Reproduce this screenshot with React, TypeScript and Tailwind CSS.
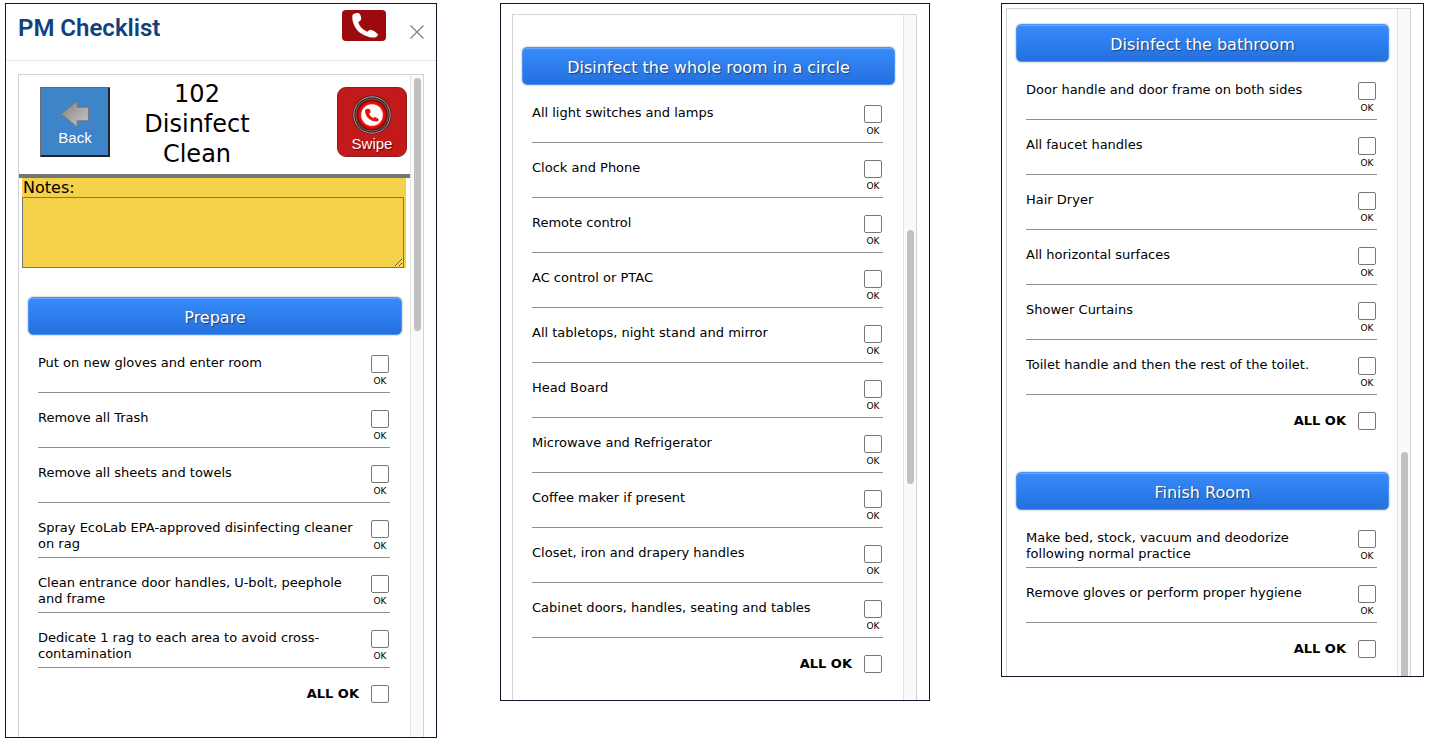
import React, { useId } from 'react';

const handsetPath =
  'M10.6 4.8 C12.5 3.2 15 2.6 17 3.2 C18.6 4.8 19.4 7 19.2 9.6 C18.6 10.8 17.4 11.4 16.4 12 C17 16 21 20 25.6 21.8 C26.4 20.8 27 20.2 28.2 19.8 C31 20.2 34 22 36 24.4 C35.8 26 34.4 27 32.4 27.5 C28 28 21 25.4 16.2 21.2 C12 17 9.4 10 10.6 4.8 Z';

function BackArrow() {
  return (
    <svg viewBox="0 0 32 28" className="h-7 w-8" aria-hidden="true">
      <defs>
        <linearGradient id="arrowFill" x1="0" y1="0" x2="1" y2="1">
          <stop offset="0" stopColor="#7d7d7d" />
          <stop offset="0.5" stopColor="#a6a6a2" />
          <stop offset="1" stopColor="#c9c9c4" />
        </linearGradient>
      </defs>
      <path
        d="M2.2 14 L18.2 1 V7.2 H29.4 V20.8 H18.2 V27 Z"
        fill="url(#arrowFill)"
        stroke="#77777a"
        strokeWidth="1"
        strokeLinejoin="round"
      />
    </svg>
  );
}

function SwipeBadge() {
  return (
    <svg viewBox="0 0 40 40" className="h-10 w-10" aria-hidden="true">
      <defs>
        <radialGradient id="badgeRed">
          <stop offset="0.7" stopColor="#ff1a1a" />
          <stop offset="0.9" stopColor="#d00808" />
          <stop offset="1" stopColor="#8a0000" />
        </radialGradient>
      </defs>
      <circle cx="20" cy="20" r="19.5" fill="#3c2222" />
      <circle cx="20" cy="20" r="18.2" fill="none" stroke="#e79a9a" strokeWidth="0.9" />
      <circle cx="20" cy="20" r="16.2" fill="none" stroke="#8a6060" strokeWidth="0.9" />
      <circle cx="20" cy="20" r="15" fill="url(#badgeRed)" />
      <circle cx="20" cy="20" r="10.8" fill="#fff" />
      <svg x="13" y="13.5" width="14" height="13" viewBox="9 2 28 26">
        <path d={handsetPath} fill="#e81010" stroke="#e81010" strokeWidth="2" />
      </svg>
    </svg>
  );
}

function SectionButton({ children }: { children: React.ReactNode }) {
  return (
    <button
      type="button"
      className="mr-2 ml-[9px] h-[38px] rounded-[5px] border border-[#4b93f5] bg-linear-to-b from-[#388bfb] to-[#2470de] pt-[3px] text-base text-white shadow-[0_0_2px_#9a9a9a,inset_0_1px_0_#63a5fa] text-shadow-[1px_1px_1px_#1c3f73]"
    >
      {children}
    </button>
  );
}

const boxClass =
  'block size-[18px] shrink-0 appearance-none rounded-[2px] border border-[#767676] bg-white checked:bg-[#2470de]';

function CheckRow({ label }: { label: string }) {
  const id = useId();
  return (
    <li className="flex h-[55px] justify-between border-b border-[#8f8f8f] pt-[17px]">
      <label htmlFor={id} className="w-[324px] text-[13px] leading-4">
        {label}
      </label>
      <div className="flex flex-col items-center pr-px">
        <input id={id} type="checkbox" className={boxClass} />
        <span className="mt-[2px] text-[9px] leading-3">OK</span>
      </div>
    </li>
  );
}

function AllOk() {
  const id = useId();
  return (
    <div className="mr-5 ml-[19px] flex items-center justify-end gap-3 pt-[17px] pr-px">
      <label htmlFor={id} className="text-[13px] leading-4 font-bold">
        ALL OK
      </label>
      <input id={id} type="checkbox" className={boxClass} />
    </div>
  );
}

function Section({ title, items }: { title: string; items: string[] }) {
  return (
    <section className="flex flex-col">
      <SectionButton>{title}</SectionButton>
      <ul className="mt-[3px] mr-5 ml-[19px]">
        {items.map((item) => (
          <CheckRow key={item} label={item} />
        ))}
      </ul>
      <AllOk />
    </section>
  );
}

function ScrollPane({ thumb, children }: { thumb: string; children: React.ReactNode }) {
  return (
    <div className="flex grow border border-b-0 border-[#d4d4d4]">
      <div className="flex min-w-0 grow flex-col">{children}</div>
      <div className="flex w-[13px] shrink-0 justify-center border-l border-[#e2e2e2] bg-[#fafafa]">
        <div className={`w-[7px] bg-[#c1c1c1] ${thumb}`} />
      </div>
    </div>
  );
}

const frameClass = 'flex flex-col border border-[#14142b] bg-white';

const prepare = [
  'Put on new gloves and enter room',
  'Remove all Trash',
  'Remove all sheets and towels',
  'Spray EcoLab EPA-approved disinfecting cleaner on rag',
  'Clean entrance door handles, U-bolt, peephole and frame',
  'Dedicate 1 rag to each area to avoid cross-contamination',
];

const room = [
  'All light switches and lamps',
  'Clock and Phone',
  'Remote control',
  'AC control or PTAC',
  'All tabletops, night stand and mirror',
  'Head Board',
  'Microwave and Refrigerator',
  'Coffee maker if present',
  'Closet, iron and drapery handles',
  'Cabinet doors, handles, seating and tables',
];

const bathroom = [
  'Door handle and door frame on both sides',
  'All faucet handles',
  'Hair Dryer',
  'All horizontal surfaces',
  'Shower Curtains',
  'Toilet handle and then the rest of the toilet.',
];

const finish = [
  'Make bed, stock, vacuum and deodorize following normal practice',
  'Remove gloves or perform proper hygiene',
];

export default function App() {
  return (
    <main className="grid grid-cols-[432fr_430fr_431fr] items-start gap-[63px] bg-white pt-[3px] pr-[6px] pl-[5px] font-['Verdana','DejaVu_Sans',sans-serif] text-black">
      <div className={frameClass}>
        <header className="flex h-[57px] items-start border-b border-[#e2e7ea] pr-3 pl-3">
          <h1 className="grow pt-2 font-['Roboto',sans-serif] text-2xl leading-8 font-semibold text-[#0f427e]">
            PM Checklist
          </h1>
          <button
            type="button"
            aria-label="Call"
            className="mt-[6px] h-[31px] w-11 rounded-[4px] bg-[#9d0a0e] text-white"
          >
            <svg viewBox="0 0 44 31" className="h-[31px] w-11" aria-hidden="true">
              <path d={handsetPath} fill="currentColor" />
            </svg>
          </button>
          <button type="button" aria-label="Close" className="mt-[21px] ml-6 text-[#808080]">
            <svg viewBox="0 0 14 14" className="size-[14px]" aria-hidden="true">
              <path d="M0.5 0.5 L13.5 13.5 M13.5 0.5 L0.5 13.5" stroke="currentColor" strokeWidth="1.3" />
            </svg>
          </button>
        </header>
        <div className="flex grow px-3 pt-[13px]">
          <ScrollPane thumb="mt-[3px] h-[253px] rounded-full">
            <div className="flex h-[103px] items-start border-b-4 border-[#757575] pr-[3px] pl-[21px]">
              <button
                type="button"
                className="mt-3 flex size-[70px] shrink-0 flex-col items-center justify-center gap-[2px] border border-t-[#6b6b6b] border-r-[#222] border-b-[#222] border-l-[#6b6b6b] bg-[#3d85c8] pt-[2px] font-['Liberation_Sans',sans-serif] text-[15px] leading-4 text-white shadow-[inset_-1px_-1px_0_#222]"
              >
                <BackArrow />
                Back
              </button>
              <h2 className="grow pt-1 pr-[53px] text-center text-2xl leading-[30px]">
                102
                <br />
                Disinfect
                <br />
                Clean
              </h2>
              <button
                type="button"
                className="mt-3 flex size-[70px] shrink-0 flex-col items-center justify-center gap-px rounded-[9px] border border-[#8f2020] bg-[#c21a1a] pt-[3px] font-['Liberation_Sans',sans-serif] text-[15px] leading-4 text-white text-shadow-[1px_1px_1px_#5c0000]"
              >
                <SwipeBadge />
                Swipe
              </button>
            </div>
            <div className="mr-1 ml-[3px] flex flex-col bg-[#f5d14a] pr-[2px]">
              <label htmlFor="notes" className="pt-px pl-px text-base leading-[18px]">
                Notes:
              </label>
              <textarea id="notes" className="h-[71px] resize border border-[#767676] bg-[#f5d14a]" />
            </div>
            <div className="flex flex-col pt-[29px] pb-[34px]">
              <Section title="Prepare" items={prepare} />
            </div>
          </ScrollPane>
        </div>
      </div>

      <div className={frameClass}>
        <div className="flex grow pt-[10px] pr-3 pl-[11px]">
          <ScrollPane thumb="mt-[215px] h-[254px] rounded-full">
            <div className="flex flex-col pt-8 pb-[27px]">
              <Section title="Disinfect the whole room in a circle" items={room} />
            </div>
          </ScrollPane>
        </div>
      </div>

      <div className={`${frameClass} ml-2`}>
        <div className="flex grow pt-[4px] pr-3 pl-[4px]">
          <ScrollPane thumb="mt-[443px] rounded-t-full">
            <div className="flex flex-col gap-[42px] pt-[15px] pb-[18px]">
              <Section title="Disinfect the bathroom" items={bathroom} />
              <Section title="Finish Room" items={finish} />
            </div>
          </ScrollPane>
        </div>
      </div>
    </main>
  );
}
